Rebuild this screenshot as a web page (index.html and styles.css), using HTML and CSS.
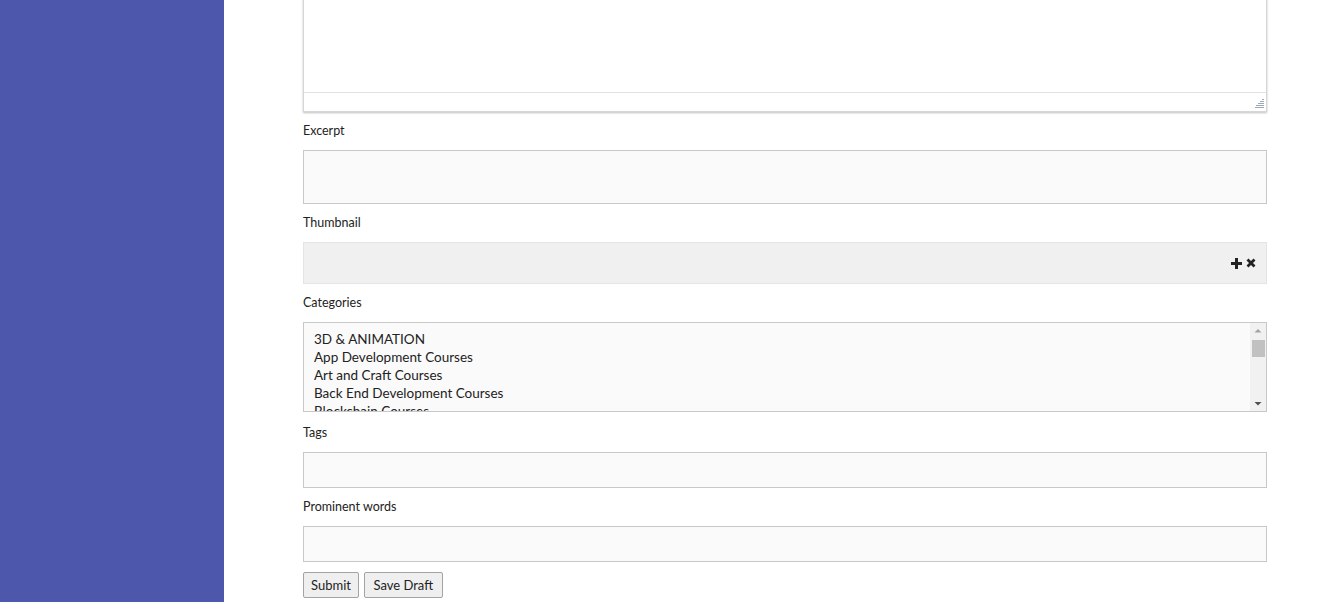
FILE: index.html
```html
<!DOCTYPE html>
<html>
<head>
<meta charset="utf-8">
<link rel="stylesheet" href="styles.css">
</head>
<body>
<div class="layout">
  <aside class="sidebar"></aside>
  <main class="main">
    <div class="editor">
      <div class="editor-area"></div>
      <div class="editor-status">
        <svg class="grip" width="9" height="9" viewBox="0 0 9 9">
          <g fill="#9aa8b8">
            <rect x="7" y="0" width="2" height="1"/>
            <rect x="5" y="2" width="4" height="1"/>
            <rect x="3" y="4" width="6" height="1"/>
            <rect x="1" y="6" width="8" height="1"/>
            <rect x="0" y="8" width="9" height="1"/>
          </g>
        </svg>
      </div>
    </div>
    <label class="field-label">Excerpt</label>
    <textarea class="control excerpt"></textarea>
    <label class="field-label">Thumbnail</label>
    <div class="thumb">
      <svg class="ico" width="11" height="11" viewBox="0 0 11 11"><path d="M4 0h3v4h4v3H7v4H4V7H0V4h4z" fill="#222"/></svg>
      <svg class="ico" width="10" height="10" viewBox="0 0 10 10"><path d="M1.5 1.5l7 7M8.5 1.5l-7 7" stroke="#222" stroke-width="2.8"/></svg>
    </div>
    <label class="field-label">Categories</label>
    <div class="control cats" role="listbox">
      <div class="cats-list">
        <div class="opt">3D &amp; ANIMATION</div>
        <div class="opt">App Development Courses</div>
        <div class="opt">Art and Craft Courses</div>
        <div class="opt">Back End Development Courses</div>
        <div class="opt">Blockchain Courses</div>
        <div class="opt">Business Courses</div>
        <div class="opt">Cloud Computing Courses</div>
      </div>
      <div class="scrollbar">
        <svg class="arrow" width="16" height="14" viewBox="0 0 16 14"><path d="M4.5 9.5L8 6l3.5 3.5z" fill="#a3a3a3"/></svg>
        <div class="track"><div class="thumb-bar"></div></div>
        <svg class="arrow" width="16" height="14" viewBox="0 0 16 14"><path d="M4.5 5L8 8.5 11.5 5z" fill="#505050"/></svg>
      </div>
    </div>
    <label class="field-label tags-label">Tags</label>
    <input class="control line" type="text">
    <label class="field-label">Prominent words</label>
    <input class="control line" type="text">
    <div class="buttons">
      <button class="btn submit">Submit</button>
      <button class="btn draft">Save Draft</button>
    </div>
  </main>
</div>
</body>
</html>
```

FILE: styles.css
```css
html, body {
  margin: 0;
  padding: 0;
  background: #fff;
  overflow: hidden;
}
body {
  font-family: "Lato", "Liberation Sans", sans-serif;
  color: #222;
}
.layout {
  display: flex;
  height: 602px;
}
.sidebar {
  width: 224px;
  flex: 0 0 224px;
  background: #4d58ad;
}
.main {
  padding-left: 79px;
  width: 964px;
  display: flex;
  flex-direction: column;
  align-items: stretch;
}
.editor {
  box-sizing: border-box;
  margin-top: -18px;
  height: 130px;
  border: 1px solid #d6d6d6;
  border-top: none;
  box-shadow: 0 1px 2px rgba(0,0,0,0.25);
  display: flex;
  flex-direction: column;
  background: #fff;
}
.editor-area {
  flex: 1;
}
.editor-status {
  box-sizing: border-box;
  height: 19px;
  border-top: 1px solid #e2e2e2;
  display: flex;
  justify-content: flex-end;
  align-items: flex-end;
  padding: 0 2px 3px 0;
}
.field-label {
  display: block;
  font-size: 12.5px;
  line-height: 18px;
  height: 18px;
  margin-top: 10px;
  margin-bottom: 10px;
  color: #222;
}
.tags-label {
  margin-top: 12px;
}
.control {
  box-sizing: border-box;
  width: 964px;
  border: 1px solid #c8c8c8;
  background: #fafafa;
  margin: 0;
  font-family: inherit;
  outline: none;
}
.excerpt {
  height: 54px;
  resize: none;
  display: block;
}
.thumb {
  box-sizing: border-box;
  height: 42px;
  background: #f0f0f0;
  border: 1px solid #e4e4e4;
  display: flex;
  justify-content: flex-end;
  align-items: center;
  gap: 4px;
  padding: 0 10px 0 0;
}
.ico {
  display: block;
}
.cats {
  height: 90px;
  display: flex;
  overflow: hidden;
}
.cats-list {
  flex: 1;
  padding: 7px 0 0 10px;
  font-size: 13.5px;
  color: #222;
  overflow: hidden;
}
.opt {
  line-height: 18px;
  height: 18px;
  white-space: nowrap;
}
.scrollbar {
  width: 16px;
  flex: 0 0 16px;
  background: #f1f1f1;
  display: flex;
  flex-direction: column;
}
.arrow {
  display: block;
  flex: 0 0 14px;
}
.track {
  flex: 1;
  padding: 3px 1px 0 2px;
}
.thumb-bar {
  height: 17px;
  background: #c1c1c1;
}
.line {
  height: 36px;
  display: block;
}
.buttons {
  display: flex;
  gap: 5px;
  margin-top: 10px;
}
.btn {
  font-family: inherit;
  font-size: 13px;
  height: 26px;
  padding: 0 7px;
  background: #efefef;
  border: 1px solid #a3a3a3;
  border-radius: 2px;
  color: #222;
}
.draft {
  padding: 0 8.5px;
}
```
